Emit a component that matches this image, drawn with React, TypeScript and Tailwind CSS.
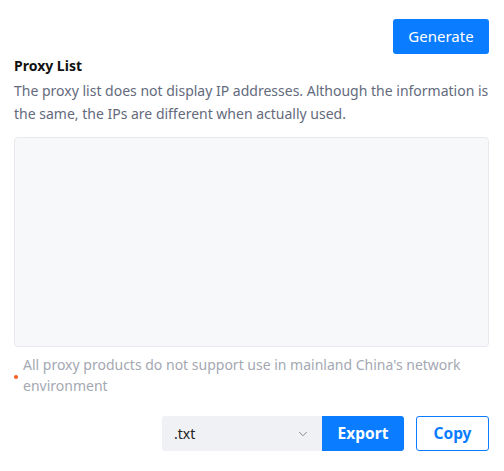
import { ChevronDown } from "lucide-react";

export default function App() {
  return (
    <div className="w-[504px] h-[471px] bg-white px-[14px] pt-[19px] font-['Noto_Sans',sans-serif] text-[14px]">
      <div className="flex justify-end pr-[1px]">
        <button className="h-[35px] w-[96px] rounded-[3px] bg-[#0a7cff] text-[15px] text-white">
          Generate
        </button>
      </div>
      <div className="mt-[1px] font-bold text-[14px] leading-[22px] text-[#111]">Proxy List</div>
      <p className="mt-[2px] leading-[23px] text-[#646a7c]">
        The proxy list does not display IP addresses. Although the information is the same, the IPs are different when actually used.
      </p>
      <textarea className="mt-[12px] block h-[210px] w-[475px] resize-none rounded-[4px] border border-[#e8e9ee] bg-[#f7f8fa] outline-none" />
      <div className="mt-[7px] flex items-start">
        <span className="mt-[21px] mr-[5px] h-[4px] w-[4px] shrink-0 rounded-full bg-[#ff5a1f]" />
        <p className="leading-[21px] text-[#a4a8b2]">
          All proxy products do not support use in mainland China's network environment
        </p>
      </div>
      <div className="mt-[20px] flex justify-end pr-[1px]">
        <div className="flex h-[35px] w-[160px] items-center justify-between rounded-l-[3px] bg-[#f0f1f4] pl-[12px] pr-[12px] text-[#222]">
          <span>.txt</span>
          <ChevronDown size={14} strokeWidth={1.5} className="text-[#777]" />
        </div>
        <button className="h-[35px] w-[82px] rounded-r-[3px] bg-[#0a7cff] text-[15.5px] font-bold text-white">
          Export
        </button>
        <button className="ml-[12px] h-[35px] w-[73px] rounded-[3px] border border-[#0a7cff] bg-white text-[15.5px] font-bold text-[#0a7cff]">
          Copy
        </button>
      </div>
    </div>
  );
}
